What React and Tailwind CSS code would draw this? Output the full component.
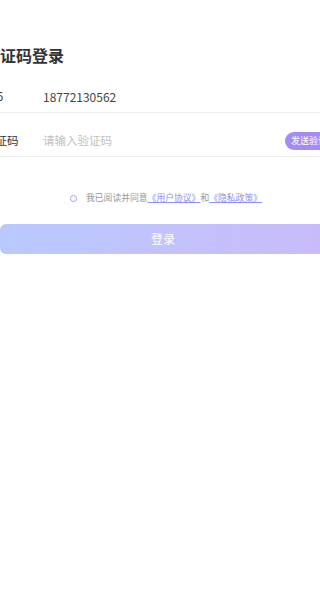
import React, { useState } from "react";

const font = { fontFamily: '"Noto Sans CJK SC", "Noto Sans", sans-serif' };

const App = () => {
  const [phone] = useState("18772130562");
  const [code, setCode] = useState("");
  const [agreed, setAgreed] = useState(false);

  return (
    <div className="w-[320px] h-[615px] overflow-hidden bg-white" style={font}>
      <div className="-ml-[16px] w-[358px]">
        {/* Title */}
        <div className="pt-[44px] h-[69px]">
          <h1 className="text-[16px] leading-[22px] font-bold text-[#333]">验证码登录</h1>
        </div>

        {/* Phone */}
        <div className="pt-[13px] border-b border-[#eeeeee]">
          <div className="flex h-[30px] items-center text-[11.5px] text-[#333]">
            <span className="w-[59px]">+86</span>
            <span className="text-[12px] text-[#444]">{phone}</span>
          </div>
        </div>

        {/* Code */}
        <div className="pt-[13px] border-b border-[#eeeeee]">
          <div className="flex h-[30px] items-center text-[11.5px] text-[#333]">
            <span className="w-[59px] shrink-0">验证码</span>
            <input
              value={code}
              onChange={(e) => setCode(e.target.value)}
              placeholder="请输入验证码"
              className="flex-1 min-w-0 bg-transparent outline-none placeholder:text-[#c0c0c0] text-[11.5px]"
            />
            <button className="shrink-0 h-[18px] px-[6px] rounded-full bg-[#a48cf3] text-white text-[9px] leading-[18px]">
              发送验证码
            </button>
          </div>
        </div>

        {/* Agreement */}
        <div className="mt-[34px] flex justify-center items-center h-[14px] pl-[6px] text-[8.8px] leading-[14px] text-[#999]">
          <button
            onClick={() => setAgreed(!agreed)}
            className={`w-[7px] h-[7px] rounded-full border border-[#a99cf5] mr-[9px] ${agreed ? "bg-[#a99cf5]" : ""}`}
          />
          <span>我已阅读并同意</span>
          <span className="text-[#8b8ff5] underline">《用户协议》</span>
          <span>和</span>
          <span className="text-[#8b8ff5] underline">《隐私政策》</span>
        </div>

        {/* Login */}
        <div className="mt-[19px] px-[16px]">
          <button className="w-full h-[30px] rounded-[6px] bg-gradient-to-r from-[#b9c9ff] to-[#c9bbfb] text-white text-[12px]">
            登录
          </button>
        </div>
      </div>
    </div>
  );
};

export default App;
